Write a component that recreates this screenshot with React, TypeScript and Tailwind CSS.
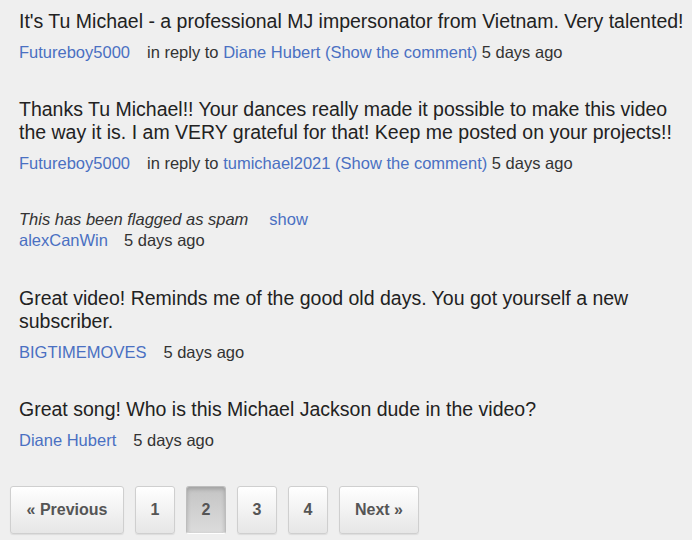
export default function App() {
  const comments = [
    {
      id: 1,
      text: "It's Tu Michael - a professional MJ impersonator from Vietnam. Very talented!",
      author: 'Futureboy5000',
      replyTo: 'Diane Hubert',
    },
    {
      id: 2,
      text: 'Thanks Tu Michael!! Your dances really made it possible to make this video the way it is. I am VERY grateful for that! Keep me posted on your projects!!',
      author: 'Futureboy5000',
      replyTo: 'tumichael2021',
    },
    { id: 3, spam: true, author: 'alexCanWin' },
    {
      id: 4,
      text: 'Great video! Reminds me of the good old days. You got yourself a new subscriber.',
      author: 'BIGTIMEMOVES',
    },
    {
      id: 5,
      text: 'Great song! Who is this Michael Jackson dude in the video?',
      author: 'Diane Hubert',
    },
  ]

  const btn =
    'h-[48px] rounded-[3px] border border-[#cfcfcf] bg-gradient-to-b from-[#ffffff] to-[#e6e6e6] text-[16px] font-bold text-[#555] shadow-[0_1px_1px_rgba(0,0,0,0.08)] flex items-center justify-center'

  return (
    <div
      className="w-[692px] h-[540px] overflow-hidden bg-[#efefef] text-[#222] pt-[10px] pl-[19px] pr-[4px]"
      style={{ fontFamily: '"Liberation Sans", Arial, sans-serif' }}
    >
      {comments.map((c) =>
        c.spam ? (
          <div key={c.id} className="mb-[36px]">
            <div className="text-[16.5px] leading-[21px] text-[#333]">
              <span className="italic">This has been flagged as spam</span>
              <a className="ml-[21px] text-[#4a70c2]">show</a>
            </div>
            <div className="text-[16.5px] leading-[21px] text-[#333]">
              <a className="text-[#4a70c2]">{c.author}</a>
              <span className="ml-[16px]">5 days ago</span>
            </div>
          </div>
        ) : (
          <div key={c.id} className="mb-[36px]">
            <p className="text-[19.5px] leading-[23px]">{c.text}</p>
            <div className="mt-[9px] text-[16.5px] leading-[20px] text-[#333]">
              <a className="text-[#4a70c2]">{c.author}</a>
              {c.replyTo ? (
                <>
                  <span className="ml-[17px]">in reply to </span>
                  <a className="text-[#4a70c2]">{c.replyTo} (Show the comment)</a>
                  <span> 5 days ago</span>
                </>
              ) : (
                <span className="ml-[17px]">5 days ago</span>
              )}
            </div>
          </div>
        )
      )}

      <div className="flex gap-[11px] -ml-[9px]">
        <div className={`${btn} w-[114px]`}>« Previous</div>
        <div className={`${btn} w-[40px]`}>1</div>
        <div className="h-[48px] w-[40px] rounded-[3px] border border-[#bdbdbd] border-b-white bg-gradient-to-b from-[#c4c4c4] to-[#dcdcdc] text-[16px] font-bold text-[#555] shadow-[inset_0_2px_4px_rgba(0,0,0,0.2)] flex items-center justify-center">
          2
        </div>
        <div className={`${btn} w-[40px]`}>3</div>
        <div className={`${btn} w-[40px]`}>4</div>
        <div className={`${btn} w-[80px]`}>Next »</div>
      </div>
    </div>
  )
}
